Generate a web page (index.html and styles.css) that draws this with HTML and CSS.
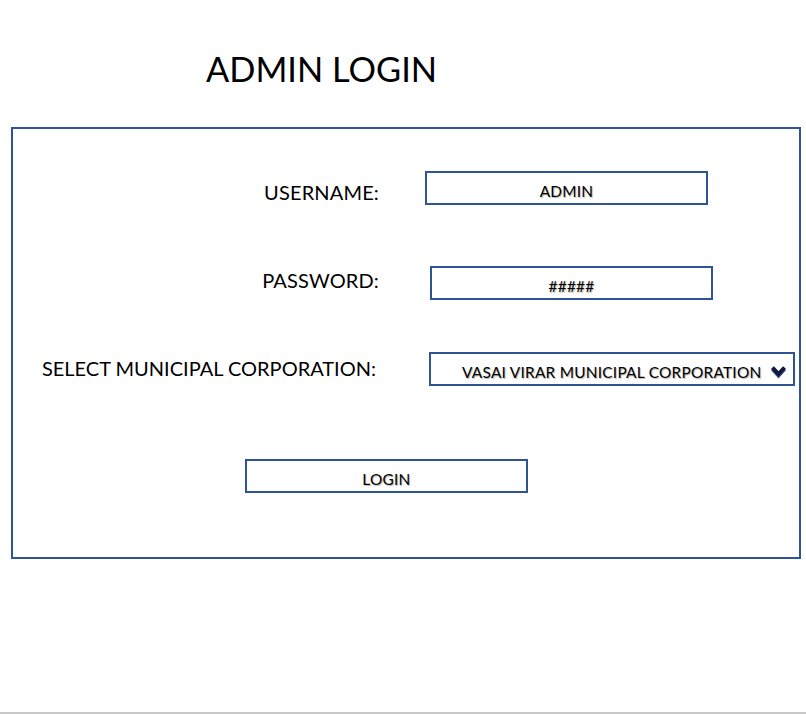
FILE: index.html
```html
<!DOCTYPE html>
<html lang="en">
<head>
<meta charset="utf-8">
<title>Admin Login</title>
<link rel="stylesheet" href="styles.css">
</head>
<body>
<h1 class="title">ADMIN LOGIN</h1>
<div class="panel">
  <div class="row row-user">
    <div class="label">USERNAME:</div>
    <div class="field field-user">ADMIN</div>
  </div>
  <div class="row row-pass">
    <div class="label">PASSWORD:</div>
    <div class="field field-pass">#####</div>
  </div>
  <div class="row row-select">
    <div class="label label-select">SELECT MUNICIPAL CORPORATION:</div>
    <div class="field field-select">
      <span class="select-text">VASAI VIRAR MUNICIPAL CORPORATION</span>
      <svg class="chevron" width="18" height="18" viewBox="0 0 18 18" aria-hidden="true">
        <polyline points="2.5,6 8.5,12.5 14.5,6" fill="none" stroke="#2f5496" stroke-width="4" stroke-linejoin="miter" stroke-miterlimit="10"/>
        <polyline points="2.5,4.5 8.5,11 14.5,4.5" fill="none" stroke="#14183a" stroke-width="4" stroke-linejoin="miter" stroke-miterlimit="10"/>
      </svg>
    </div>
  </div>
  <div class="row row-login">
    <div class="field field-login">LOGIN</div>
  </div>
</div>
<div class="bottom-line"></div>
</body>
</html>
```

FILE: styles.css
```css
html, body {
  margin: 0;
  padding: 0;
  background: #ffffff;
}

body {
  font-family: Lato, "Open Sans", "Liberation Sans", sans-serif;
  color: #000000;
  width: 806px;
  height: 714px;
  overflow: hidden;
}

.title {
  margin: 48px 0 0 206px;
  font-size: 34.4px;
  line-height: 42px;
  font-weight: 400;
}

.panel {
  box-sizing: border-box;
  margin: 37px 0 0 11px;
  width: 790px;
  border: 2px solid #2f5496;
  padding: 42px 0 64px 0;
}

.row {
  display: grid;
  grid-template-columns: 366px auto;
  align-items: start;
}

.row-pass { margin-top: 61px; }
.row-select { margin-top: 52px; }
.row-login { margin-top: 73px; grid-template-columns: auto; }

.label {
  font-size: 20px;
  line-height: 24px;
  text-align: right;
  white-space: nowrap;
  letter-spacing: 0.15px;
}

.row-user .label { padding-top: 9px; }
.row-pass .label { padding-top: 2px; }
.row-select .label { padding-top: 4px; padding-right: 3px; letter-spacing: 0; }

.field {
  box-sizing: border-box;
  height: 34px;
  width: 283px;
  border: 2px solid #2f5496;
  padding: 9px 0 3px 0;
  font-size: 15.4px;
  line-height: 18px;
  letter-spacing: 0.25px;
  text-align: center;
  text-shadow: 1px 1px 1px rgba(0, 0, 0, 0.3);
  white-space: nowrap;
}

.field-user { margin-left: 46px; }
.field-pass { margin-left: 51px; }

.field-select {
  margin-left: 50px;
  width: 366px;
  display: flex;
  align-items: flex-start;
  gap: 9px;
  padding-left: 31px;
  text-align: left;
}

.chevron {
  display: block;
  flex: none;
  margin-top: 0;
}

.field-login { margin-left: 232px; }

.bottom-line {
  margin-top: 153px;
  height: 2px;
  background: #c8c8c8;
}
```
